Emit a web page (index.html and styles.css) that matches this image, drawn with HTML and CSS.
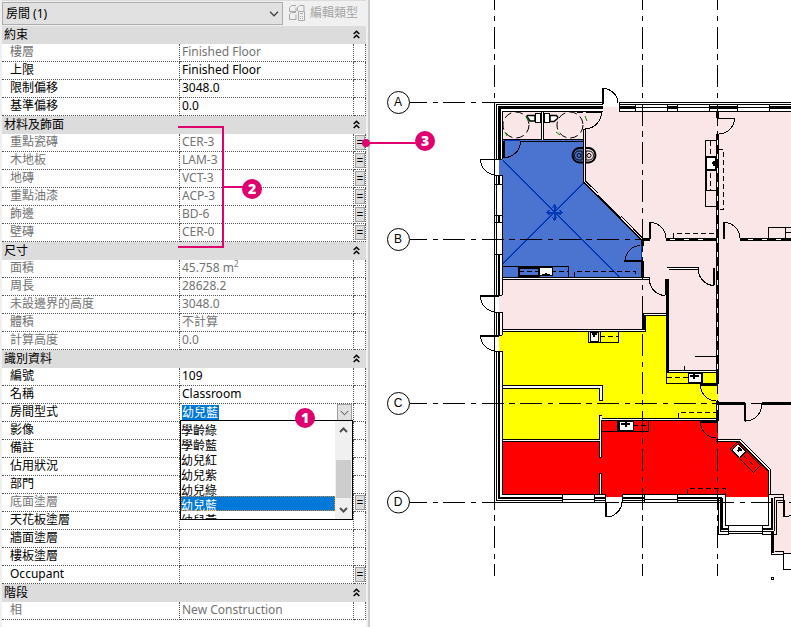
FILE: index.html
```html
<!DOCTYPE html>
<html lang="zh-Hant">
<head>
<meta charset="utf-8">
<title>房間性質</title>
<link rel="stylesheet" href="styles.css">
</head>
<body>
<div class="app">
  <aside class="panel">
    <div class="toolbar">
      <div class="type-box">
        <select class="type-select" aria-label="類型"><option>房間 (1)</option></select>
        <svg class="type-chevron" viewBox="0 0 10 6" aria-hidden="true"><path d="M1 .8 5 4.8 9 .8" fill="none" stroke="#444" stroke-width="1.3"/></svg>
      </div>
      <button class="edit-type" type="button" disabled>
        <svg class="edit-icon" viewBox="0 0 17 16" aria-hidden="true"><g fill="none" stroke="#a9a9a9"><path d="M.5 6.500V2.500L2.500.5H7M.5 6.500H7V2.500M8.500 6V2.500L10.500.5H15V6M.5 14.500V9.500L2.500 7.500H7M.5 14.500H7V9.500"/><path d="M9.500 6.500h6v9h-6z"/><path d="M11 8.500h3M11 11.500h1M13 11.500h1M11 13.500h1M13 13.500h1"/></g></svg>
        <span>編輯類型</span>
      </button>
    </div>
    <table class="props">
      <colgroup><col class="c-name"><col class="c-value"><col class="c-link"></colgroup>
      <tbody>
        <tr><th class="group" colspan="3"><div class="group-row">約束<button class="fold" type="button" aria-label="收合"><svg viewBox="0 0 7 9"><path d="M.7 4 3.500 1.200 6.300 4M.7 8 3.500 5.200 6.300 8"/></svg></button></div></th></tr>
        <tr class="dim"><td>樓層</td><td>Finished Floor</td><td></td></tr>
        <tr><td>上限</td><td>Finished Floor</td><td></td></tr>
        <tr><td>限制偏移</td><td>3048.0</td><td></td></tr>
        <tr><td>基準偏移</td><td>0.0</td><td></td></tr>
      </tbody>
      <tbody>
        <tr><th class="group" colspan="3"><div class="group-row">材料及飾面<button class="fold" type="button" aria-label="收合"><svg viewBox="0 0 7 9"><path d="M.7 4 3.500 1.200 6.300 4M.7 8 3.500 5.200 6.300 8"/></svg></button></div></th></tr>
        <tr class="dim"><td>重點瓷磚</td><td>CER-3</td><td><button class="link" type="button">=</button></td></tr>
        <tr class="dim"><td>木地板</td><td>LAM-3</td><td><button class="link" type="button">=</button></td></tr>
        <tr class="dim"><td>地磚</td><td>VCT-3</td><td><button class="link" type="button">=</button></td></tr>
        <tr class="dim"><td>重點油漆</td><td>ACP-3</td><td><button class="link" type="button">=</button></td></tr>
        <tr class="dim"><td>飾邊</td><td>BD-6</td><td><button class="link" type="button">=</button></td></tr>
        <tr class="dim"><td>壁磚</td><td>CER-0</td><td><button class="link" type="button">=</button></td></tr>
      </tbody>
      <tbody>
        <tr><th class="group" colspan="3"><div class="group-row">尺寸<button class="fold" type="button" aria-label="收合"><svg viewBox="0 0 7 9"><path d="M.7 4 3.500 1.200 6.300 4M.7 8 3.500 5.200 6.300 8"/></svg></button></div></th></tr>
        <tr class="dim"><td>面積</td><td>45.758 m<sup>2</sup></td><td></td></tr>
        <tr class="dim"><td>周長</td><td>28628.2</td><td></td></tr>
        <tr class="dim"><td>未設邊界的高度</td><td>3048.0</td><td></td></tr>
        <tr class="dim"><td>體積</td><td>不計算</td><td></td></tr>
        <tr class="dim"><td>計算高度</td><td>0.0</td><td></td></tr>
      </tbody>
      <tbody>
        <tr><th class="group" colspan="3"><div class="group-row">識別資料<button class="fold" type="button" aria-label="收合"><svg viewBox="0 0 7 9"><path d="M.7 4 3.500 1.200 6.300 4M.7 8 3.500 5.200 6.300 8"/></svg></button></div></th></tr>
        <tr><td>編號</td><td>109</td><td></td></tr>
        <tr><td>名稱</td><td>Classroom</td><td></td></tr>
        <tr>
          <td><label for="room-style">房間型式</label></td>
          <td class="combo-cell">
            <div class="combo">
              <input class="combo-input" id="room-style" type="text" value="幼兒藍">
              <button class="combo-button" type="button" aria-label="展開"><svg viewBox="0 0 9 6"><path d="M.7 1 4.500 4.800 8.300 1" fill="none" stroke="#444"/></svg></button>
              <div class="menu">
                <select class="menu-list" size="7" aria-label="房間型式">
                  <option>學齡綠</option><option>學齡藍</option><option>幼兒紅</option><option>幼兒紫</option><option>幼兒綠</option><option selected>幼兒藍</option><option>幼兒黃</option>
                </select>
                <div class="scroll">
                  <svg class="scroll-arrow" viewBox="0 0 9 6"><path d="M1 5 4.500 1.500 8 5"/></svg>
                  <div class="scroll-thumb"></div>
                  <svg class="scroll-arrow" viewBox="0 0 9 6"><path d="M1 1 4.500 4.500 8 1"/></svg>
                </div>
              </div>
            </div>
          </td>
          <td></td>
        </tr>
        <tr><td>影像</td><td></td><td></td></tr>
        <tr><td>備註</td><td></td><td></td></tr>
        <tr><td>佔用狀況</td><td></td><td></td></tr>
        <tr><td>部門</td><td></td><td></td></tr>
        <tr class="dim"><td>底面塗層</td><td></td><td><button class="link" type="button">=</button></td></tr>
        <tr><td>天花板塗層</td><td></td><td></td></tr>
        <tr><td>牆面塗層</td><td></td><td></td></tr>
        <tr><td>樓板塗層</td><td></td><td></td></tr>
        <tr><td>Occupant</td><td></td><td><button class="link" type="button">=</button></td></tr>
      </tbody>
      <tbody>
        <tr><th class="group" colspan="3"><div class="group-row">階段<button class="fold" type="button" aria-label="收合"><svg viewBox="0 0 7 9"><path d="M.7 4 3.500 1.200 6.300 4M.7 8 3.500 5.200 6.300 8"/></svg></button></div></th></tr>
        <tr class="dim"><td>相</td><td>New Construction</td><td></td></tr>
      </tbody>
    </table>
  </aside>

  <main class="canvas">
    <svg class="plan" viewBox="370 0 421 627" preserveAspectRatio="xMinYMin meet" role="img" aria-label="樓層平面圖">
      <g class="fills">
        <path class="pink" d="M502 111H603V107H618V111H791V497H770V470L740 440H718V370H667V315H645V331H502z"/>
        <path class="pink" d="M773 498H791V553H773z"/>
        <path class="blue" d="M502 140H583V182L642 240V277H502z"/>
        <path class="yellow" d="M502 331H645V315H667V372H718V419H601V440H502z"/>
        <path class="red" d="M502 441H600V420H718V440H740L770 470V497H726V494H622V497H606V494H502z"/>
        <path class="white" d="M541 111h3v29h-3zM502 277h147v2H502zM502 329h143v2H502zM643 313h24v2H643zM502 386h100v15h-3v-12H502zM600 415h2v42h-2zM600 473h2v21h-2zM502 439h98v2H502zM601 418h117v2H601zM667 268h31v2h-31zM667 370h50v2h-50zM718 439h22L771 469V497H768V471L739 441H718z"/>
      </g>

      <!-- room location reference -->
      <g class="room-lines">
        <path d="M502.500 160 619.500 277M584 182.500 502.500 264M598 195 621 218M641.500 245V261M504 140.500H520"/>
        <path stroke-width="2" d="M554.500 206V219M548 212.500H561"/>
        <path d="M552 208 554.500 205 557 208M552 217 554.500 220 557 217M549.500 210 547 212.500 549.500 215M559.500 210 562 212.500 559.500 215"/>
      </g>

      <!-- exterior walls -->
      <g class="line">
        <path d="M494.500 502.500V102.500H603M496.500 500V104.500H603M502.500 159V111.500H603M502.500 175V295M502.500 312V335M502.500 351V494M619 102.500H791M619 104.500H791M619 111.500H791M619 102V111"/>
        <path d="M636 107.500H667M677 107.500H709M737 107.500H769M635.500 104V111M667.500 104V111M677.500 104V111M709.500 104V111M737.500 104V111M769.500 104V111"/>
        <path class="exterior" d="M499.500 159V107.500H603M619 107.500H635M668 107.500H677M710 107.500H737M770 107.500H791"/>
        <path class="thick" d="M499 254V295M499 312V335M499 351V498H562M595 498H605M622 498H645M677 498H722"/>
        <path d="M494 502.500H606M622 502.500H718.500M496 500.500H562M595 500.500H605M622 500.500H645M677 500.500H720M502 494.500H606M622 494.500H725.500M562 499.500H595M645 499.500H677M562.500 494V502M594.500 494V502M605.500 494V502M622.500 494V502M644.500 494V502M677.500 494V502"/>
        <path d="M495 159.500H502M495 175.500H502M495 184.500H502M495 215.500H502M495 222.500H502M495 254.500H502M495 295.500H502M495 312.500H502M495 335.500H502M495 351.500H502"/>
        <path class="thick" d="M499 176V184M499 215V222"/>
      </g>
      <path class="white" d="M495 160h4v15h-4zM495 296h4v16h-4zM495 336h4v15h-4z"/>
      <path class="white" d="M498 185h4v30h-4zM498 223h4v31h-4z"/>
      <path class="blue" d="M499 160h4v15h-4z"/>
      <path class="pink" d="M499 296h4v16h-4z"/>
      <path class="yellow" d="M499 336h4v15h-4z"/>

      <!-- grid lines -->
      <g class="grid">
        <path d="M494.500 0V576M642.500 0V576M717.500 0V576" stroke-dashoffset="11.600"/>
        <path d="M410 102.500H494M410 239.500H642M410 403.500H762M410 502.500H791" stroke-dashoffset="5"/>
      </g>

      <!-- interior walls -->
      <g class="line">
        <path d="M502 139.500H541.500V111M583 139.500H543.500V111M502 141.500H504M520 141.500H583M583.500 129V182L642 240.500M585.500 129V181L598 193M621 216 643 238.500M583 129.500H586"/>
        <path d="M598 195 621 218"/>
        <path d="M502 277.500H649.500V279.500H502M502 329.500H643.500V313.500H667M502 331.500H645.500V315.500H667M667 267.500H698.500V269.500H669M666 370.500H717M666 372.500H717M695 356.500H716M684.500 366V370"/>
        <path d="M502 385.500H602.500V400.500H599.500V388.500H502M599.500 439V415.500H602M601.500 418.500H718M718 420.500H601.500V457.500H599.500V441.500M599.500 494V473.500H601.500V494M502 439.500H600M502 441.500H600"/>
        <path d="M716 439.500H740.500L770.500 469.500V494M716 441.500H739L768.500 471V494"/>
      </g>
      <g class="line heavy">
        <path d="M717.500 111V118M717.500 134V384M717.500 401V421M642.500 239V246M642.500 261V277M642 239.500H650M666 239.500H717M740 239.500H791M667.500 279V372M643.500 315V330M717 403.500H745M762 403.500H791"/>
      </g>
      <path class="wall-gaps" d="M717.500 140V380M670 239.500H712M748 239.500H785"/>
      <path class="wall-gaps" d="M717.500 405V418"/>

      <!-- bay at grid D -->
      <g class="line">
        <path d="M718.500 498V534.500H728.500V525.500H725.500V494M720.500 499V531.500H728M728 525.500H762M762 525.500V534.500M728 533.500H762M728 531.500H762M762 525.500H768.500V494M762 534.500H776.500V500.500H783M774.500 531V497.500H783M768 494.500H783.500V500M771.500 531V554.500H783.500V551.500H775M783.500 553V569.500H791M783 553.500H791M762 531.500H774"/>
        <path class="thick" d="M722 498V529H728M762 529H772V498M773 531V553"/>
        <path d="M771 577.500h2v1.500h-2z"/>
      </g>

      <!-- doors -->
      <g class="line">
        <path class="leaf" d="M480 296H499M480 336H499M603 88V104M504 141V158M650 222V239M724 222V239M624 261H643M666 279V295M714 268V285M700 385H718M745 403V421M700 422H718M606 502V517M784 500V517"/>
        <path d="M480 159.500H499M480.500 160A16 16 0 0 0 495 175M480.500 296A16 16 0 0 0 495 312M480.500 336A16 16 0 0 0 495 351M603 88.500A15 15 0 0 1 618 103M601.500 112A17 17 0 0 1 585 129M520.500 141A16 16 0 0 1 504 157.500M650.500 222.500A16 16 0 0 1 666 239M724 222.500A16 16 0 0 1 740 239M640 245.500A16 16 0 0 0 625 261M649.500 279A16 16 0 0 0 665 295.500M698.500 268A16 16 0 0 0 714 285.500M700.500 385A16 16 0 0 0 716 401M745.500 421A16 16 0 0 0 761.500 404M700.500 422A16 16 0 0 0 716 438M606 517A16 16 0 0 0 622 502M717 118.500H734.500A16 16 0 0 1 718 134M784 517 791 515.500"/>
      </g>

      <!-- casework and fixtures -->
      <g class="line">
        <path d="M705.500 140.500H716M705.500 140V206.500H717M705 190.500H716M768 238V227.500H791M785.500 228V238M785 232.500H791M502 266.500H568.500V277M519.500 266V277M588.500 332V342.500H618.500V332M600.500 332V342M666.500 373V383.500H717V373M602 431.500H648.500V421"/>
        <path class="dash" d="M710.500 141V190M718 149.500H723.500V209.500H718M673.500 238V233.500H716M519 271.500H568M574.500 277V271.500H635.500V277M600 336.500H618M667 377.500H700M678.500 418V412.500H716M687.500 494V488.500H725.500V494M633 425.500H648"/>
        <path class="thick" d="M519 267.500H539V276H519zM705 157H716M705 170H716M706 157V190M702 373V383M618 421V431"/>
        <g class="sink">
          <path d="M706.500 157.500H715V169.500H706.500zM539.500 267.500H552V275.500H539.500zM590 332.500H598.500V341.500H590zM688 373.500H701V382.500H688zM619.500 421.500H633V430.500H619.500z"/>
        </g>
        <path class="thick" d="M712 163H716M714 161V166M542 275H550M546 273V276M592 334H597M594 333V337M690 376H699M694 374V379M621 424H630M626 422V427"/>
        <g transform="translate(738 443) rotate(45)">
          <path d="M-1.500 0H32V10H-1.500zM12 0V10"/>
          <path class="sink-shape" d="M1 1H11V9H1z"/>
          <path class="dash" d="M13 5H31"/>
          <path class="thick" d="M3 3H8M5.500 2V6"/>
        </g>
        <path class="sink-shape" d="M535.500 113.500h5v9h-5zM544.500 113.500h5v9h-5z"/>
        <path class="thick" d="M577 111.500H583M586 112H601"/>
        <g class="smooth">
          <path class="sink-shape" stroke-width="1.500" d="M535 115.500H528Q526 115.500 528 118L530 121H535zM550 115.500H556Q559 117 557 119L554 121.500H550z"/>
          <circle class="swing" cx="516" cy="125" r="13"/>
          <circle class="swing" cx="570" cy="125" r="13"/>
          <path class="green" d="M527 117l2 5M505 132l2 4M585 116l2 5M556 132l4 3"/>
          <path class="thick" d="M583 148H579A7.300 7.300 0 0 0 579 162.500H583M586 148H589A7.300 7.300 0 0 1 589 162.500H586"/>
          <path d="M582 151H579A4.500 4.500 0 0 0 579 160H582zM586 151H589A4.500 4.500 0 0 1 589 160H586z"/>
          <circle cx="579" cy="155.500" r="2"/><circle cx="589" cy="155.500" r="2"/>
        </g>
      </g>

      <!-- grid heads -->
      <g class="heads">
        <circle cx="398.500" cy="102.500" r="11"/><circle cx="398.500" cy="239.500" r="11"/><circle cx="398.500" cy="403.500" r="11"/><circle cx="398.500" cy="502" r="11"/>
        <text x="398" y="106">A</text><text x="398" y="243">B</text><text x="398" y="407">C</text><text x="398" y="506">D</text>
      </g>
    </svg>
  </main>

  <svg class="callouts" width="450" height="440" viewBox="0 0 450 440">
    <path d="M178 127H223V247H178M223 187H243M366 143H416"/>
    <circle cx="366" cy="143" r="4"/>
    <circle cx="305" cy="418" r="10"/><circle cx="252" cy="189" r="10"/><circle cx="425" cy="141" r="10"/>
    <text x="305" y="423">1</text><text x="252" y="194">2</text><text x="425" y="146">3</text>
  </svg>
</div>
</body>
</html>
```
FILE: styles.css
```css
* { box-sizing: border-box; }

body {
  margin: 0;
  background: #fff;
  color: #000;
  font: 12px/16px "Noto Sans", "Noto Sans CJK TC", sans-serif;
}

button, input, select { font: inherit; color: inherit; }

.app {
  position: relative;
  display: grid;
  grid-template-columns: 370px 1fr;
  min-height: 100vh;
}

.panel {
  padding: 0 2px 0 0;
  border-right: 2px solid #cdcdcd;
  border-left: 2px solid #f0f0f0;
  background: linear-gradient(#f0f0f0, #f0f0f0) right / 2px 100% no-repeat, #fff;
}

.toolbar {
  display: flex;
  gap: 6px;
  height: 26px;
  padding-top: 2px;
  background: #f0f0f0;
  box-shadow: inset 0 1px #dcdcdc;
}

.type-box { position: relative; width: 281px; height: 23px; }

.type-select {
  appearance: none;
  width: 100%;
  height: 100%;
  padding: 0 3px;
  border: 1px solid #adadad;
  border-radius: 0;
  background: #e1e1e1;
}

.type-chevron { position: absolute; top: 9px; right: 4px; width: 10px; height: 6px; }

.edit-type {
  display: flex;
  align-items: center;
  gap: 4px;
  padding: 0 0 2px;
  border: 0;
  background: none;
  color: #a5a5a5;
  white-space: nowrap;
}

.edit-icon { width: 17px; height: 16px; }

.props { width: 100%; table-layout: fixed; border-collapse: separate; border-spacing: 0; }
.c-name { width: 178px; }
.c-link { width: 12px; }

.props tr { height: 18px; }

.props td {
  height: 18px;
  padding: 0 0 2px 2px;
  border-right: 1px dotted #555;
  border-bottom: 1px dotted #555;
  line-height: 15px;
  white-space: nowrap;
}

.props td:first-child { padding-left: 8px; }
.props td:last-child { padding: 0 0 0 1px; }
.props .combo-cell { padding-bottom: 0; }
.dim { color: #737373; }

.props sup { font-size: 8px; line-height: 8px; vertical-align: 5px; }

.group { height: 18px; padding: 0; background: #dcdcdc; font-weight: 400; text-align: left; }

.group-row {
  display: flex;
  align-items: center;
  justify-content: space-between;
  height: 18px;
  padding: 0 6px 1px 2px;
}

.fold { display: flex; padding: 0; border: 0; background: none; }
.fold svg { width: 7px; height: 9px; fill: none; stroke: #000; stroke-width: 1.5; }

.link {
  display: block;
  width: 10px;
  height: 15px;
  padding: 0;
  border: 1px solid #a0a0a0;
  background: #dcdcdc;
  color: #000;
  font-size: 12px;
  line-height: 13px;
}

.combo { position: relative; display: flex; align-items: center; justify-content: space-between; height: 17px; padding-right: 1px; }

.combo-input {
  width: 37px;
  height: 15px;
  padding: 0;
  border: 0;
  background: #0078d7;
  color: #fff;
}

.combo-button {
  display: flex;
  align-items: center;
  justify-content: center;
  width: 15px;
  height: 17px;
  padding: 0;
  border: 1px solid #a0a0a0;
  background: #e1e1e1;
}

.combo-button svg { width: 9px; height: 6px; }

.menu {
  position: absolute;
  z-index: 2;
  top: 16px;
  left: -2px;
  display: flex;
  width: 173px;
  height: 100px;
  border: 1px solid #000;
  background: #fff;
}

.menu-list {
  appearance: none;
  flex: 1;
  height: 98px;
  padding: 0;
  border: 0;
  outline: 0;
  overflow: hidden;
  background: #fff;
}

.menu-list option { height: 15px; min-height: 15px; padding: 0; line-height: 15px; }

.menu-list option:checked {
  background: #0078d7 linear-gradient(#0078d7, #0078d7);
  outline: 1px dotted #e08a30;
  outline-offset: -1px;
  color: #fff;
  -webkit-text-fill-color: #fff;
}

.scroll {
  display: flex;
  flex-direction: column;
  align-items: center;
  justify-content: space-between;
  width: 17px;
  padding: 6px 1px;
  background: #f0f0f0;
}

.scroll-arrow { width: 9px; height: 6px; fill: none; stroke: #505050; stroke-width: 2; }
.scroll-thumb { width: 100%; height: 38px; margin-top: 18px; background: #cdcdcd; }

.canvas { min-width: 0; overflow: hidden; }
.plan { display: block; width: 100%; height: auto; shape-rendering: crispEdges; }

.pink { fill: #fae6e6; }
.blue { fill: #4b74d1; }
.yellow { fill: #ff0; }
.red { fill: #f00; }
.white { fill: #fff; }

.room-lines { fill: none; stroke: #0038b8; }
.grid { fill: none; stroke: #000; stroke-dasharray: 22 5.5 5.4 5.5; }
.line { fill: none; stroke: #000; }
.thick, .leaf { stroke-width: 2; }
.exterior, .heavy { stroke-width: 3; }
.dash { stroke-dasharray: 5 3; }
.wall-gaps { fill: none; stroke: #fff; stroke-dasharray: 5 9; }
.sink, .sink-shape { fill: #fff; }
.smooth { shape-rendering: auto; }
.swing { stroke-dasharray: 8 4; }
.green { stroke: #080; }

.heads { fill: #fff; stroke: #000; shape-rendering: auto; }

.heads text {
  fill: #000;
  stroke: none;
  font: 12px "Liberation Sans", sans-serif;
  text-anchor: middle;
}

.callouts {
  position: absolute;
  z-index: 3;
  top: 0;
  left: 0;
  pointer-events: none;
}

.callouts path { fill: none; stroke: #e0006e; stroke-width: 2; }
.callouts circle { fill: #e0006e; }

.callouts text {
  fill: #fff;
  font: 800 14px "Open Sans", sans-serif;
  text-anchor: middle;
}
```
